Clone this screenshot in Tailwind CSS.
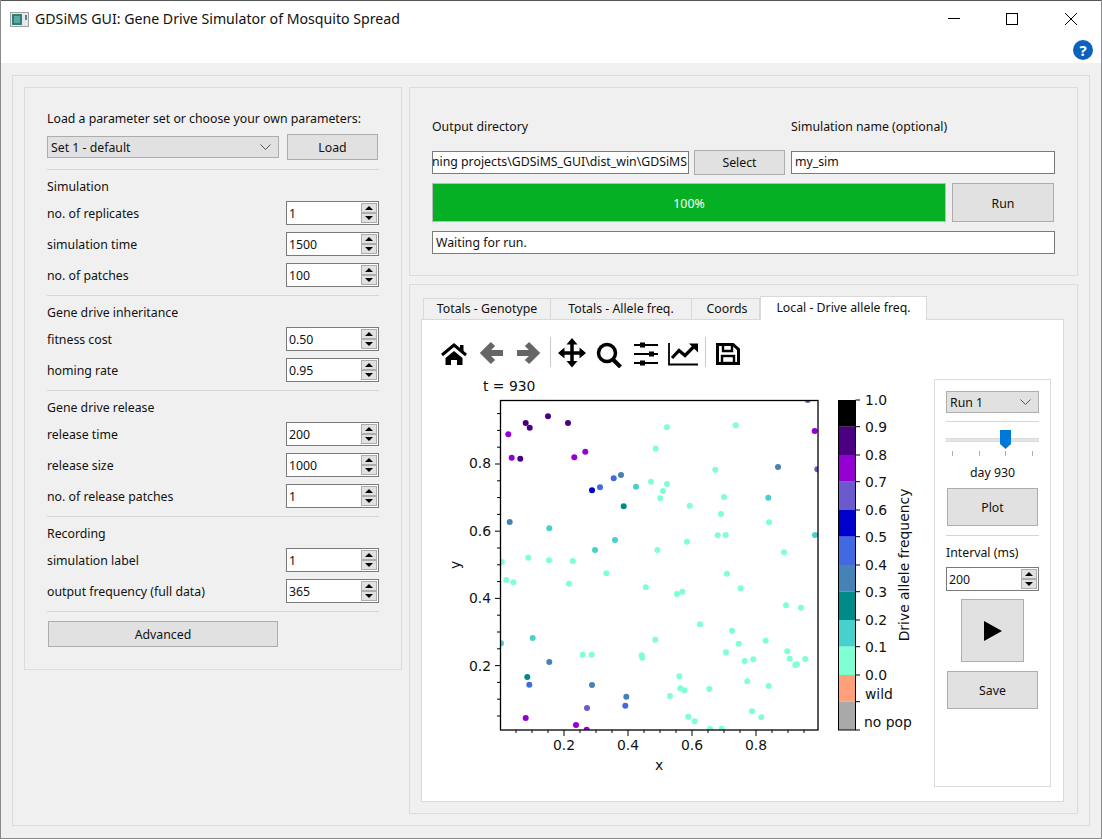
<!doctype html>
<html>
<head>
<meta charset="utf-8">
<title>GDSiMS GUI</title>
<script src="https://cdn.jsdelivr.net/npm/@tailwindcss/browser@4"></script>
</head>
<body class="m-0 bg-[#f0f0f0]">
<div class="w-[1102px] h-[839px] overflow-hidden flex flex-col bg-[#f0f0f0] border-x border-b border-[#8a8a8a] font-['Noto_Sans',sans-serif] text-[12.3px] text-[#111]">

	<!-- title bar -->
	<div class="h-[63px] bg-white shrink-0 flex flex-col border-t border-[#555]">
		<div class="h-[39px] flex items-start">
			<svg class="ml-[9px] mt-[11px]" width="19" height="15" viewBox="0 0 19 15">
				<rect x="0.5" y="0.5" width="18" height="14" fill="#e8e8e8" stroke="#a0a0a0"/>
				<rect x="2" y="2" width="10" height="11" fill="#2f7f78"/>
				<rect x="4" y="4" width="6" height="7" fill="#5aa9a0"/>
				<rect x="15" y="3" width="2" height="5" fill="#5f7f9f"/>
			</svg>
			<span class="ml-[6px] mt-[8px] text-[14.15px] leading-[20px] text-[#111]">GDSiMS GUI: Gene Drive Simulator of Mosquito Spread</span>
			<svg class="ml-auto mr-[23px] mt-[11px]" width="130" height="14" viewBox="948 12 130 14" fill="none" stroke="#000">
				<path d="M948 18.500H960"/>
				<rect x="1006.500" y="13.500" width="11" height="11"/>
				<path d="M1065 13L1077 25M1077 13L1065 25"/>
			</svg>
		</div>
		<div class="flex justify-end pr-[8px]">
			<div class="w-[20px] h-[20px] rounded-full bg-[#0a62bc] text-white text-[15px] leading-[20px] font-bold text-center">?</div>
		</div>
	</div>

	<!-- outer group -->
	<div class="mt-[12px] ml-[11px] w-[1078px] h-[751px] border border-[#dcdcdc] p-[11px] flex gap-[7px]">

		<!-- parameters -->
		<div class="w-[378px] h-[583px] border border-[#dcdcdc] pt-[20px] pl-[22px] pr-[22px]">
			<div class="h-[20px] leading-[22px]">Load a parameter set or choose your own parameters:</div>
			<div class="mt-[6px] h-[26px] flex items-center">
				<div class="w-[232px] h-[22px] bg-[#e1e1e1] border border-[#adadad] flex items-center pl-[3px] pr-[7px] justify-between">
					<span class="pt-[2px]">Set 1 - default</span>
					<svg width="11" height="6" viewBox="0 0 11 6" fill="none" stroke="#555"><path d="M0.5 0.5L5.5 5.5L10.5 0.5"/></svg>
				</div>
				<div class="ml-[8px] w-[91px] h-[26px] pt-[2px] bg-[#e1e1e1] border border-[#adadad] flex items-center justify-center">Load</div>
			</div>
			<div class="mt-[9px] h-px bg-[#d6d6d6]"></div>

			<div class="mt-[6px] h-[20px] leading-[22px]">Simulation</div>
			<div class="mt-[5px] h-[24px] flex items-center justify-between">
				<span class="pt-[2px]">no. of replicates</span>
				<div class="w-[93px] h-[24px] bg-white border border-[#7a7a7a] flex items-center justify-between pl-[2px] pr-[1px]"><span class="pt-[2px]">1</span><div class="w-[16px] h-[20px] flex flex-col"><div class="h-[10px] bg-[#e1e1e1] border border-[#adadad] flex items-center justify-center"><div class="w-0 h-0 border-x-[4px] border-x-transparent border-b-[4px] border-b-black"></div></div><div class="h-[10px] bg-[#e1e1e1] border border-[#adadad] flex items-center justify-center"><div class="w-0 h-0 border-x-[4px] border-x-transparent border-t-[4px] border-t-black"></div></div></div></div>
			</div>
			<div class="mt-[7px] h-[24px] flex items-center justify-between">
				<span class="pt-[2px]">simulation time</span>
				<div class="w-[93px] h-[24px] bg-white border border-[#7a7a7a] flex items-center justify-between pl-[2px] pr-[1px]"><span class="pt-[2px]">1500</span><div class="w-[16px] h-[20px] flex flex-col"><div class="h-[10px] bg-[#e1e1e1] border border-[#adadad] flex items-center justify-center"><div class="w-0 h-0 border-x-[4px] border-x-transparent border-b-[4px] border-b-black"></div></div><div class="h-[10px] bg-[#e1e1e1] border border-[#adadad] flex items-center justify-center"><div class="w-0 h-0 border-x-[4px] border-x-transparent border-t-[4px] border-t-black"></div></div></div></div>
			</div>
			<div class="mt-[7px] h-[24px] flex items-center justify-between">
				<span class="pt-[2px]">no. of patches</span>
				<div class="w-[93px] h-[24px] bg-white border border-[#7a7a7a] flex items-center justify-between pl-[2px] pr-[1px]"><span class="pt-[2px]">100</span><div class="w-[16px] h-[20px] flex flex-col"><div class="h-[10px] bg-[#e1e1e1] border border-[#adadad] flex items-center justify-center"><div class="w-0 h-0 border-x-[4px] border-x-transparent border-b-[4px] border-b-black"></div></div><div class="h-[10px] bg-[#e1e1e1] border border-[#adadad] flex items-center justify-center"><div class="w-0 h-0 border-x-[4px] border-x-transparent border-t-[4px] border-t-black"></div></div></div></div>
			</div>
			<div class="mt-[8px] h-px bg-[#d6d6d6]"></div>

			<div class="mt-[6px] h-[20px] leading-[22px]">Gene drive inheritance</div>
			<div class="mt-[5px] h-[24px] flex items-center justify-between">
				<span class="pt-[2px]">fitness cost</span>
				<div class="w-[93px] h-[24px] bg-white border border-[#7a7a7a] flex items-center justify-between pl-[2px] pr-[1px]"><span class="pt-[2px]">0.50</span><div class="w-[16px] h-[20px] flex flex-col"><div class="h-[10px] bg-[#e1e1e1] border border-[#adadad] flex items-center justify-center"><div class="w-0 h-0 border-x-[4px] border-x-transparent border-b-[4px] border-b-black"></div></div><div class="h-[10px] bg-[#e1e1e1] border border-[#adadad] flex items-center justify-center"><div class="w-0 h-0 border-x-[4px] border-x-transparent border-t-[4px] border-t-black"></div></div></div></div>
			</div>
			<div class="mt-[7px] h-[24px] flex items-center justify-between">
				<span class="pt-[2px]">homing rate</span>
				<div class="w-[93px] h-[24px] bg-white border border-[#7a7a7a] flex items-center justify-between pl-[2px] pr-[1px]"><span class="pt-[2px]">0.95</span><div class="w-[16px] h-[20px] flex flex-col"><div class="h-[10px] bg-[#e1e1e1] border border-[#adadad] flex items-center justify-center"><div class="w-0 h-0 border-x-[4px] border-x-transparent border-b-[4px] border-b-black"></div></div><div class="h-[10px] bg-[#e1e1e1] border border-[#adadad] flex items-center justify-center"><div class="w-0 h-0 border-x-[4px] border-x-transparent border-t-[4px] border-t-black"></div></div></div></div>
			</div>
			<div class="mt-[8px] h-px bg-[#d6d6d6]"></div>

			<div class="mt-[6px] h-[20px] leading-[22px]">Gene drive release</div>
			<div class="mt-[5px] h-[24px] flex items-center justify-between">
				<span class="pt-[2px]">release time</span>
				<div class="w-[93px] h-[24px] bg-white border border-[#7a7a7a] flex items-center justify-between pl-[2px] pr-[1px]"><span class="pt-[2px]">200</span><div class="w-[16px] h-[20px] flex flex-col"><div class="h-[10px] bg-[#e1e1e1] border border-[#adadad] flex items-center justify-center"><div class="w-0 h-0 border-x-[4px] border-x-transparent border-b-[4px] border-b-black"></div></div><div class="h-[10px] bg-[#e1e1e1] border border-[#adadad] flex items-center justify-center"><div class="w-0 h-0 border-x-[4px] border-x-transparent border-t-[4px] border-t-black"></div></div></div></div>
			</div>
			<div class="mt-[7px] h-[24px] flex items-center justify-between">
				<span class="pt-[2px]">release size</span>
				<div class="w-[93px] h-[24px] bg-white border border-[#7a7a7a] flex items-center justify-between pl-[2px] pr-[1px]"><span class="pt-[2px]">1000</span><div class="w-[16px] h-[20px] flex flex-col"><div class="h-[10px] bg-[#e1e1e1] border border-[#adadad] flex items-center justify-center"><div class="w-0 h-0 border-x-[4px] border-x-transparent border-b-[4px] border-b-black"></div></div><div class="h-[10px] bg-[#e1e1e1] border border-[#adadad] flex items-center justify-center"><div class="w-0 h-0 border-x-[4px] border-x-transparent border-t-[4px] border-t-black"></div></div></div></div>
			</div>
			<div class="mt-[7px] h-[24px] flex items-center justify-between">
				<span class="pt-[2px]">no. of release patches</span>
				<div class="w-[93px] h-[24px] bg-white border border-[#7a7a7a] flex items-center justify-between pl-[2px] pr-[1px]"><span class="pt-[2px]">1</span><div class="w-[16px] h-[20px] flex flex-col"><div class="h-[10px] bg-[#e1e1e1] border border-[#adadad] flex items-center justify-center"><div class="w-0 h-0 border-x-[4px] border-x-transparent border-b-[4px] border-b-black"></div></div><div class="h-[10px] bg-[#e1e1e1] border border-[#adadad] flex items-center justify-center"><div class="w-0 h-0 border-x-[4px] border-x-transparent border-t-[4px] border-t-black"></div></div></div></div>
			</div>
			<div class="mt-[8px] h-px bg-[#d6d6d6]"></div>

			<div class="mt-[6px] h-[20px] leading-[22px]">Recording</div>
			<div class="mt-[5px] h-[24px] flex items-center justify-between">
				<span class="pt-[2px]">simulation label</span>
				<div class="w-[93px] h-[24px] bg-white border border-[#7a7a7a] flex items-center justify-between pl-[2px] pr-[1px]"><span class="pt-[2px]">1</span><div class="w-[16px] h-[20px] flex flex-col"><div class="h-[10px] bg-[#e1e1e1] border border-[#adadad] flex items-center justify-center"><div class="w-0 h-0 border-x-[4px] border-x-transparent border-b-[4px] border-b-black"></div></div><div class="h-[10px] bg-[#e1e1e1] border border-[#adadad] flex items-center justify-center"><div class="w-0 h-0 border-x-[4px] border-x-transparent border-t-[4px] border-t-black"></div></div></div></div>
			</div>
			<div class="mt-[7px] h-[24px] flex items-center justify-between">
				<span class="pt-[2px]">output frequency (full data)</span>
				<div class="w-[93px] h-[24px] bg-white border border-[#7a7a7a] flex items-center justify-between pl-[2px] pr-[1px]"><span class="pt-[2px]">365</span><div class="w-[16px] h-[20px] flex flex-col"><div class="h-[10px] bg-[#e1e1e1] border border-[#adadad] flex items-center justify-center"><div class="w-0 h-0 border-x-[4px] border-x-transparent border-b-[4px] border-b-black"></div></div><div class="h-[10px] bg-[#e1e1e1] border border-[#adadad] flex items-center justify-center"><div class="w-0 h-0 border-x-[4px] border-x-transparent border-t-[4px] border-t-black"></div></div></div></div>
			</div>
			<div class="mt-[8px] h-px bg-[#d6d6d6]"></div>
			<div class="mt-[9px] ml-px w-[230px] h-[26px] pt-[2px] bg-[#e1e1e1] border border-[#adadad] flex items-center justify-center">Advanced</div>
		</div>

		<!-- right column -->
		<div class="w-[669px] flex flex-col gap-[8px]">

			<!-- run group -->
			<div class="h-[189px] border border-[#dcdcdc] pt-[29px] pl-[22px] pr-[22px]">
				<div class="h-[20px] leading-[20px] flex">
					<span class="w-[359px]">Output directory</span>
					<span>Simulation name (optional)</span>
				</div>
				<div class="mt-[13px] h-[25px] flex items-center">
					<div class="w-[257px] h-[23px] bg-white border border-[#7a7a7a] overflow-hidden flex justify-end items-center pr-[1px] whitespace-nowrap">ning projects\GDSiMS_GUI\dist_win\GDSiMS</div>
					<div class="ml-[5px] w-[91px] h-[25px] pt-[2px] bg-[#e1e1e1] border border-[#adadad] flex items-center justify-center">Select</div>
					<div class="ml-[6px] flex-1 h-[23px] bg-white border border-[#7a7a7a] flex items-center pl-[3px]">my_sim</div>
				</div>
				<div class="mt-[8px] h-[39px] flex">
					<div class="w-[514px] pt-[3px] bg-[#06b025] border border-[#bcbcbc] text-white flex items-center justify-center">100%</div>
					<div class="ml-[6px] w-[102px] pt-[3px] bg-[#e1e1e1] border border-[#adadad] flex items-center justify-center">Run</div>
				</div>
				<div class="mt-[9px] h-[23px] pt-[2px] bg-white border border-[#7a7a7a] flex items-center pl-[3px]">Waiting for run.</div>
			</div>

			<!-- tabs group -->
			<div class="h-[530px] border border-[#dcdcdc] pt-[12px] pl-[11px] pr-[13px]">
				<div class="h-[22px] flex items-end pl-[2px]">
					<div class="w-[128px] h-[21px] border border-b-0 border-[#d9d9d9] flex items-center justify-center">Totals - Genotype</div>
					<div class="w-[141px] h-[21px] border border-b-0 border-l-0 border-[#d9d9d9] flex items-center justify-center">Totals - Allele freq.</div>
					<div class="w-[68px] h-[21px] pl-[3px] border border-b-0 border-l-0 border-[#d9d9d9] flex items-center justify-center">Coords</div>
					<div class="w-[167px] h-[24px] -mb-px relative bg-white border border-b-0 border-[#d9d9d9] flex items-center justify-center">Local - Drive allele freq.</div>
				</div>
				<div class="h-[483px] bg-white border border-[#d9d9d9] flex">
					<div class="w-[512px]">
						<!-- toolbar -->
						<div class="h-[50px] pt-[16px] pl-[18px] flex items-start">
							<svg width="28" height="32" viewBox="440 336 28 32"><path d="M442 355L454 345L466 355" fill="none" stroke="#000" stroke-width="3"/><path d="M445.500 358L454 351L462.500 358V365H457V360H451V365H445.500Z"/><rect x="460" y="345" width="3.500" height="6"/></svg>
							<svg class="ml-[11px]" width="26" height="32" viewBox="479 336 26 32" fill="none" stroke="#666" stroke-width="6"><path d="M493 344L484 353L493 362"/><path d="M485 353H503"/></svg>
							<svg class="ml-[10px]" width="26" height="32" viewBox="515 336 26 32" fill="none" stroke="#666" stroke-width="6"><path d="M527 344L536 353L527 362"/><path d="M535 353H517"/></svg>
							<div class="ml-[9px] mt-px w-px h-[30px] bg-[#c8c8c8]"></div>
							<svg class="ml-[6px]" width="30" height="32" viewBox="557 336 30 32"><path d="M572 342V364M560 353H584" fill="none" stroke="#000" stroke-width="3.500"/><path d="M572 338L577.500 344.500H566.500ZM572 367.500L577.500 361H566.500ZM558 353L564.500 347.500V358.500ZM586 353L579.500 347.500V358.500Z"/></svg>
							<svg class="ml-[8px]" width="28" height="32" viewBox="595 336 28 32" fill="none" stroke="#000"><circle cx="607" cy="353" r="8.500" stroke-width="3.500"/><path d="M613 359.500L620.500 367" stroke-width="4"/></svg>
							<svg class="ml-[10px]" width="26" height="32" viewBox="633 336 26 32"><path d="M634 345H658M634 354H658M634 363H658" fill="none" stroke="#000" stroke-width="1.800"/><rect x="640" y="342.500" width="5" height="5"/><rect x="649" y="351.500" width="5" height="5"/><rect x="640" y="360.500" width="5" height="5"/></svg>
							<svg class="ml-[8px]" width="32" height="32" viewBox="667 336 32 32" fill="none" stroke="#000"><path d="M669 343V364.500H698" stroke-width="1.800"/><path d="M672 358L679 350.500L685 355.500L694 346.500" stroke-width="3.200"/><path d="M689 343.500H698V352.500Z" fill="#000" stroke="none"/></svg>
							<div class="ml-[6px] mt-px w-px h-[30px] bg-[#c8c8c8]"></div>
							<svg class="ml-[9px]" width="26" height="32" viewBox="715 336 26 32" fill="none" stroke="#000"><path d="M717.500 344.500H733L738.500 349.500V363.500H717.500Z" stroke-width="3"/><path d="M723 345V351H732V345" stroke-width="2.400"/><rect x="722" y="356" width="12" height="7" stroke-width="2.400"/></svg>
						</div>
						<!-- plot -->
						<svg id="plot" class="block font-['DejaVu_Sans',sans-serif]" width="512" height="431" viewBox="422 370 512 431" font-size="13.9" fill="#111">
							<defs><clipPath id="axes"><rect x="500.500" y="400.500" width="317.500" height="329.500"/></clipPath></defs>
							<g id="dots" clip-path="url(#axes)"></g>
							<rect x="500.500" y="400.500" width="317.500" height="329.500" fill="none" stroke="#000" stroke-width="1.300"/>
							<g id="ticks" stroke="#000" fill="none"></g>
							<text x="483" y="391">t = 930</text>
							<g text-anchor="end">
								<text x="491" y="468">0.8</text>
								<text x="491" y="536">0.6</text>
								<text x="491" y="603">0.4</text>
								<text x="491" y="671">0.2</text>
							</g>
							<g text-anchor="middle">
								<text x="564" y="750">0.2</text>
								<text x="628" y="750">0.4</text>
								<text x="692" y="750">0.6</text>
								<text x="756" y="750">0.8</text>
								<text x="659" y="770">x</text>
								<text transform="translate(460 565) rotate(-90)">y</text>
								<text transform="translate(909 565) rotate(-90)">Drive allele frequency</text>
							</g>
							<g id="bar"></g>
							<g>
								<text x="865" y="405">1.0</text>
								<text x="865" y="432">0.9</text>
								<text x="865" y="460">0.8</text>
								<text x="865" y="487">0.7</text>
								<text x="865" y="515">0.6</text>
								<text x="865" y="542">0.5</text>
								<text x="865" y="570">0.4</text>
								<text x="865" y="597">0.3</text>
								<text x="865" y="625">0.2</text>
								<text x="865" y="652">0.1</text>
								<text x="865" y="680">0.0</text>
								<text x="865" y="699">wild</text>
								<text x="864" y="727">no pop</text>
							</g>
						</svg>
					</div>

					<!-- playback panel -->
					<div class="mt-[59px] w-[117px] h-[408px] border border-[#dcdcdc] pt-[11px] pl-[11px] pr-[11px]">
						<div class="h-[22px] bg-[#e1e1e1] border border-[#adadad] flex items-center justify-between pl-[3px] pr-[7px]">
							<span class="pt-[2px]">Run 1</span>
							<svg width="11" height="6" viewBox="0 0 11 6" fill="none" stroke="#555"><path d="M0.5 0.5L5.5 5.5L10.5 0.5"/></svg>
						</div>
						<div class="mt-[8px] h-px bg-[#d6d6d6]"></div>
						<div class="mt-[8px] h-[26px] relative">
							<div class="absolute left-0 right-0 top-[8px] h-[4px] bg-[#e5e5e5] border border-[#dcdcdc]"></div>
							<svg class="absolute left-[54px] top-0" width="11" height="19" viewBox="0 0 11 19"><path d="M0 0H11V14L5.500 19L0 14Z" fill="#0078d7"/></svg>
							<div class="absolute left-[6px] top-[21px] w-px h-[5px] bg-[#b0b0b0]"></div>
							<div class="absolute left-[33px] top-[21px] w-px h-[5px] bg-[#b0b0b0]"></div>
							<div class="absolute left-[59px] top-[21px] w-px h-[5px] bg-[#b0b0b0]"></div>
							<div class="absolute left-[86px] top-[21px] w-px h-[5px] bg-[#b0b0b0]"></div>
						</div>
						<div class="mt-[6px] h-[20px] leading-[22px] text-center">day 930</div>
						<div class="mt-[6px] mx-px h-[38px] pt-[2px] bg-[#e1e1e1] border border-[#adadad] flex items-center justify-center">Plot</div>
						<div class="mt-[9px] h-px bg-[#d6d6d6]"></div>
						<div class="mt-[6px] h-[20px] leading-[22px]">Interval (ms)</div>
						<div class="mt-[5px] h-[24px] bg-white border border-[#7a7a7a] flex items-center justify-between pl-[2px] pr-[1px]"><span class="pt-[2px]">200</span><div class="w-[16px] h-[20px] flex flex-col"><div class="h-[10px] bg-[#e1e1e1] border border-[#adadad] flex items-center justify-center"><div class="w-0 h-0 border-x-[4px] border-x-transparent border-b-[4px] border-b-black"></div></div><div class="h-[10px] bg-[#e1e1e1] border border-[#adadad] flex items-center justify-center"><div class="w-0 h-0 border-x-[4px] border-x-transparent border-t-[4px] border-t-black"></div></div></div></div>
						<div class="mt-[8px] ml-[15px] w-[63px] h-[63px] bg-[#e1e1e1] border border-[#adadad] flex items-center justify-center">
							<svg width="18" height="20" viewBox="0 0 18 20"><path d="M0 0L18 10L0 20Z"/></svg>
						</div>
						<div class="mt-[9px] mx-px h-[38px] pt-[2px] bg-[#e1e1e1] border border-[#adadad] flex items-center justify-center">Save</div>
					</div>
				</div>
			</div>
		</div>
	</div>
</div>
<script>
	var NS = 'http://www.w3.org/2000/svg';
	function add(parent, tag, attrs) {
		var el = document.createElementNS(NS, tag);
		for (var k in attrs) el.setAttribute(k, attrs[k]);
		document.getElementById(parent).appendChild(el);
	}

	// points read off the plot, grouped by colour
	var points = {
		'#4B0082': [[525.7,423],[529.7,427.7],[548,416.3],[568,423],[520.3,458.7]],
		'#9400D3': [[508.3,434.3],[511.7,457.7],[574.3,457.3],[585.3,451.7],[814.7,431],[525.7,718],[576,725],[586.7,729.7]],
		'#0000CD': [[592,490.3]],
		'#4169E1': [[600,487.3],[613.7,478.3],[529.3,684.7],[625.3,705.7]],
		'#4682B4': [[621,475],[509.7,522],[778,467],[549.3,662],[592,685],[626.3,696.7]],
		'#008B8B': [[623.7,506.3],[527.3,677]],
		'#6A5ACD': [[807.7,400],[817.3,469.3],[587,708]],
		'#48D1CC': [[636,486.7],[549.3,528.3],[615,540],[595,550],[768.3,497.7],[815,535],[532.7,638],[501,643.3]],
		'#7FFFD4': [[655.7,448.5],[651,481.7],[660.3,498.3],[528.3,557.7],[549,560.3],[572.7,561],[657.5,550],[501.7,562],
			[667,427.3],[735.7,425.3],[715.3,469.7],[667,484],[663,491],[724,497],[689.7,505.7],[721,514],[769,522.3],[717.7,535.3],[725.7,535],[687,541.7],[784,552.3],
			[606.3,573.3],[506.3,580],[513.3,582.3],[569,583.7],[645.7,587.3],[655.3,639.7],[582.7,654.7],[591.7,654.7],[641.7,655.3],[642.3,657.7],
			[727,573.7],[740.7,588.3],[677,594],[682.3,591.7],[786,605.3],[801,607.7],[700,624.3],[732,630.7],[738.7,643.7],[765.7,640.7],[787.3,651.3],[726,652.3],[789.7,658.7],[805.3,659],[744.7,661],[753.3,659.3],[795.3,665],[797,664.3],[679.3,676.3],[747.3,681.3],[768.7,686],[680.3,688.3],[684.3,690.3],[709.3,689],[670,696],[752,711.3],[761.3,717.3],[688.3,716.7],[694.7,721.3],[710,729],[721.7,728.7]]
	};
	for (var c in points) points[c].forEach(function (p) {
		add('dots', 'circle', {cx: p[0], cy: p[1], r: 3, fill: c});
	});

	// x ticks every 0.05, y ticks likewise
	for (var i = 0; i < 20; i++) {
		var x = 516 + i * 16, major = (x - 564) % 64 === 0;
		if (x < 818) add('ticks', 'path', {d: 'M' + x + ' 730V' + (major ? 736 : 733)});
		var y = 716 - i * 16.8, ymajor = i % 4 === 3;
		if (y > 401) add('ticks', 'path', {d: 'M500 ' + y + 'H' + (ymajor ? 495 : 497)});
	}

	// colourbar
	var edges = [400,426.7,455,481.7,510,536.7,565,591.7,620,646.7,675,701.7,730];
	var colours = ['#000000','#4B0082','#9400D3','#6A5ACD','#0000CD','#4169E1','#4682B4','#008B8B','#48D1CC','#7FFFD4','#FFA07A','#A9A9A9'];
	colours.forEach(function (col, n) {
		add('bar', 'rect', {x: 838.5, y: edges[n], width: 17, height: edges[n + 1] - edges[n], fill: col});
	});
	add('bar', 'rect', {x: 838.5, y: 400.5, width: 17, height: 329.5, fill: 'none', stroke: '#000'});
	edges.forEach(function (e) {
		add('bar', 'path', {d: 'M855.5 ' + e + 'H860', stroke: '#000'});
	});
</script>
</body>
</html>
